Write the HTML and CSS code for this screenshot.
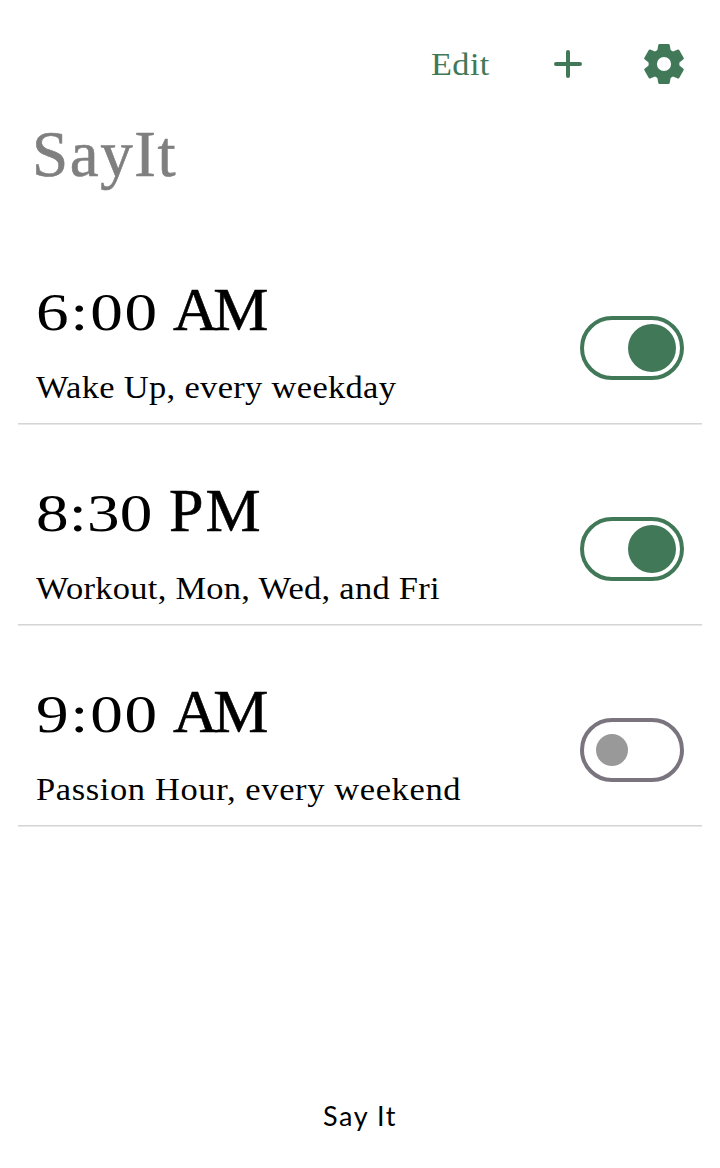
FILE: index.html
```html
<!DOCTYPE html>
<html lang="en">
<head>
<meta charset="utf-8">
<title>SayIt</title>
<link rel="stylesheet" href="styles.css">
</head>
<body>
<main class="app">
  <header class="toolbar">
    <button class="edit">Edit</button>
    <button class="icon-button add" aria-label="Add"><svg class="plus" viewBox="0 0 28 28"><path d="M14 2v24M2 14h24"/></svg></button>
    <button class="icon-button" aria-label="Settings"><svg class="gear" viewBox="0 0 40 40"><path fill-rule="evenodd" d="M15.5 0h9q1 0 1.200 1l.9 5 2.400 1.400 4.800-1.900q.9-.3 1.400.5l4.400 7.700q.5.9-.2 1.500l-4 3.300v3l4 3.300q.7.6.2 1.500l-4.400 7.700q-.5.8-1.400.5L29 32.600l-2.400 1.400-.9 5q-.2 1-1.200 1h-9q-1 0-1.200-1l-.9-5-2.400-1.400-4.800 1.900q-.9.300-1.400-.5L.4 26.300q-.5-.9.200-1.500l4-3.300v-3l-4-3.300q-.7-.6-.2-1.500L4.800 6q.5-.8 1.400-.5L11 7.400 13.400 6l.9-5q.2-1 1.200-1zM20 12.900a7.100 7.100 0 1 0 0 14.200 7.100 7.100 0 0 0 0-14.200z"/></svg></button>
  </header>
  <h1 class="title">SayIt</h1>
  <section class="alarms">
    <article class="alarm">
      <div class="details">
        <div class="time"><span class="digits">6:00</span><span class="period am">AM</span></div>
        <p class="label">Wake Up, every weekday</p>
      </div>
      <button class="toggle on" role="switch" aria-checked="true" aria-label="Wake Up"><span class="knob"></span></button>
    </article>
    <article class="alarm">
      <div class="details">
        <div class="time"><span class="digits evening">8:30</span><span class="period pm">PM</span></div>
        <p class="label workout">Workout, Mon, Wed, and Fri</p>
      </div>
      <button class="toggle on" role="switch" aria-checked="true" aria-label="Workout"><span class="knob"></span></button>
    </article>
    <article class="alarm">
      <div class="details">
        <div class="time"><span class="digits">9:00</span><span class="period am">AM</span></div>
        <p class="label passion">Passion Hour, every weekend</p>
      </div>
      <button class="toggle" role="switch" aria-checked="false" aria-label="Passion Hour"><span class="knob"></span></button>
    </article>
  </section>
  <footer class="footer">Say It</footer>
</main>
</body>
</html>
```

FILE: styles.css
```css
* { box-sizing: border-box; }
body { margin: 0; background: #fff; color: #000; font-family: "Liberation Serif", serif; }
button { border: 0; padding: 0; background: none; color: inherit; font: inherit; }
.app { height: 1168px; display: flex; flex-direction: column; }
.toolbar { height: 128px; padding-right: 36px; display: flex; align-items: center; justify-content: flex-end; color: #417858; }
.edit { width: 60px; margin-right: 63px; font-size: 32px; letter-spacing: .4px; text-align: left; white-space: nowrap; transform: scaleX(1.07); transform-origin: left; }
.icon-button { display: flex; }
.add { margin-right: 62px; }
.plus { width: 28px; height: 28px; stroke: #417858; stroke-width: 4; stroke-linecap: round; }
.gear { width: 40px; height: 40px; fill: #417858; }
.title { height: 96px; margin: 0; padding: 0 0 0 32px; color: #7f7f7f; font-size: 65px; line-height: 53px; font-weight: 400; letter-spacing: 1.6px; -webkit-text-stroke: .6px #7f7f7f; }
.alarms { padding: 0 18px; }
.alarm { height: 201px; padding: 46px 18px 0; display: flex; justify-content: space-between; border-bottom: 1px solid #e8e8e8; box-shadow: inset 0 -1px #d5d5d5; }
.time { height: 78px; display: flex; align-items: baseline; line-height: 78px; white-space: nowrap; }
.digits { width: 137px; font-size: 53px; letter-spacing: 1.4px; transform: scaleX(1.23); transform-origin: left; }
.evening { letter-spacing: .1px; }
.period { font-size: 62px; -webkit-text-stroke: .6px #000; }
.am { letter-spacing: -4.5px; }
.pm { margin-left: -4px; letter-spacing: 2px; }
.label { margin: 17px 0 0; font-size: 32px; line-height: 44px; letter-spacing: .3px; white-space: nowrap; transform: scaleX(1.077); transform-origin: left; }
.workout { letter-spacing: .25px; }
.passion { letter-spacing: .58px; }
.toggle { width: 104px; height: 64px; margin-top: 46px; padding: 0 12px 0 12px; display: flex; align-items: center; border: 4px solid #79747e; border-radius: 32px; }
.knob { width: 32px; height: 32px; border-radius: 50%; background: #999; }
.toggle.on { justify-content: flex-end; padding-right: 4px; border-color: #417858; }
.on .knob { width: 48px; height: 48px; background: #417858; }
.footer { margin-top: auto; height: 106px; display: flex; align-items: center; justify-content: center; font: 27px Lato, sans-serif; letter-spacing: 1.6px; }
```
